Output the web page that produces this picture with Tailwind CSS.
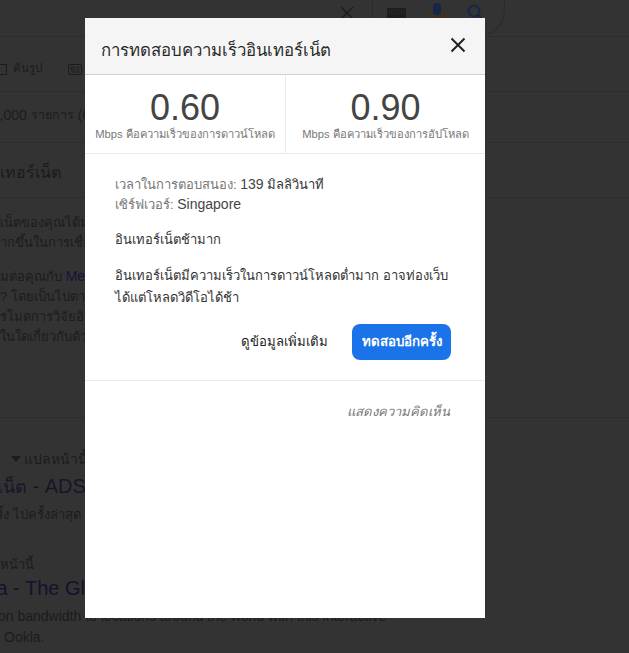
<!DOCTYPE html>
<html lang="th">
<head>
<meta charset="utf-8">
<script src="https://cdn.jsdelivr.net/npm/@tailwindcss/browser@4"></script>
<title>Speed test</title>
</head>
<body class="m-0 bg-[#333333]">
<div class="relative w-[629px] h-[653px] overflow-hidden bg-[#333333] font-['Liberation_Sans','Noto_Sans',sans-serif] text-[#1d1d1d]">
  <!-- dimmed page behind -->
  <div class="flex flex-col w-[629px]">
    <div class="h-[37px] border-b border-[#2d2d2d] flex items-start">
      <svg width="14" height="14" viewBox="0 0 14 14" class="ml-[340px] mt-[6px]"><path d="M1 1L13 13M13 1L1 13" stroke="#1c1c1c" stroke-width="1.4"/></svg>
      <div class="ml-[18px] w-[133px] h-[36px] flex items-start border-r border-b border-[#2b2b2b] rounded-br-[26px]">
        <div class="w-px h-[28px] bg-[#2b2b2b]"></div>
        <svg width="19" height="10" viewBox="0 0 19 10" class="ml-[14px] mt-[8px]"><rect width="19" height="10" fill="#1e1e1e"/><path d="M2 3H17M2 5.5H17" stroke="#333333" stroke-width="0.8" stroke-dasharray="1 1"/></svg>
        <svg width="16" height="16" viewBox="0 0 16 16" class="ml-[23px] mt-[2px]"><path d="M1 10C1 18 15 18 15 10" fill="none" stroke="#4a2f14" stroke-width="2"/><rect x="4" y="1" width="8" height="12" rx="4" fill="#152648"/></svg>
        <svg width="16" height="16" viewBox="0 0 16 16" class="ml-[21px] mt-[3px]"><circle cx="8" cy="8" r="5.5" fill="none" stroke="#152648" stroke-width="2"/><path d="M12 12L16 16" stroke="#152648" stroke-width="2"/></svg>
      </div>
    </div>
    <div class="h-[55px] border-b border-[#2d2d2d] flex items-center text-[11.5px] text-[#1c1c1c] pt-[10px]">
      <span class="w-[7px] h-[11px] border border-l-0 border-[#1c1c1c] mr-[6px]"></span><span class="mr-[26px]">ค้นรูป</span>
      <svg width="14" height="11" viewBox="0 0 14 11"><rect x="0.5" y="0.5" width="13" height="10" rx="1.5" fill="none" stroke="#1c1c1c"/><path d="M3 3H6V6H3ZM8 3.5H11.5M8 6H11.5M3 8H11.5" fill="none" stroke="#1c1c1c"/></svg>
    </div>
    <div class="h-[50px] flex items-center ml-[-16px] pb-[4px] text-[#1c1c1c] whitespace-nowrap"><span class="text-[14px]">25,000</span><span class="text-[12.5px] ml-[4px]">รายการ</span><span class="text-[14px] ml-[4px]">(0</span></div>
    <div class="h-[56px] border-y border-[#2d2d2d] flex items-center pt-[5px] text-[16px] text-[#1a1a1a]">เทอร์เน็ต</div>
    <div class="pt-[15px] h-[220px] border-b border-[#2d2d2d] text-[13px] whitespace-nowrap text-[#1c1c1c]">
      <div class="h-[20px] leading-[20px]">เน็ตของคุณได้ม</div>
      <div class="h-[20px] leading-[20px]">ากขึ้นในการเชื่อ</div>
      <div class="h-[21px] leading-[20px] mt-[13px]">มต่อคุณกับ <span class="text-[14px] text-[#15153a]">Me</span></div>
      <div class="h-[20px] leading-[20px]">? โดยเป็นไปตา</div>
      <div class="h-[20px] leading-[20px]">รโมตการวิจัยอิน</div>
      <div class="h-[20px] leading-[20px]">ในใดเกี่ยวกับตัวคุ</div>
    </div>
    <div class="pt-[31px] text-[14px] whitespace-nowrap text-[#1c1c1c]">
      <div class="flex items-center h-[20px] pl-[11px]"><span class="w-0 h-0 border-x-[5px] border-t-[6px] border-x-transparent border-t-[#1c1c1c] mr-[3px]"></span><span>แปลหน้านี้</span></div>
      <div class="h-[28px] leading-[28px] text-[#1a1428] mt-[3px] ml-[-3px]"><span class="text-[18px]">เน็ต</span><span class="text-[20px]"> - ADSL</span></div>
      <div class="h-[20px] text-[13px] leading-[20px] mt-[5px] ml-[-13px]">ครั้ง ไปครั้งล่าสุด</div>
      <div class="h-[20px] mt-[30px] text-[13px] leading-[20px]">หน้านี้</div>
      <div class="h-[28px] text-[20px] leading-[28px] text-[#14122e] ml-[-8px] mt-[-1px]">la - The Global</div>
      <div class="h-[20px] leading-[20px] mt-[4px] ml-[-2px]">on bandwidth to locations around the world with this interactive</div>
      <div class="h-[20px] leading-[20px] mt-[1px] ml-[4px]">Ookla.</div>
    </div>
  </div>

  <!-- modal -->
  <div class="absolute left-[85px] top-[18px] w-[400px] h-[600px] bg-white flex flex-col">
    <div class="h-[57px] bg-[#f5f5f5] border-b border-[#cfcfcf] flex items-center justify-between pl-[16px] pr-[19px] shrink-0">
      <div class="text-[16.75px] text-[#2a2a2a] mt-[10px]">การทดสอบความเร็วอินเทอร์เน็ต</div>
      <svg width="16" height="16" viewBox="0 0 16 16" class="mt-[-2px]"><path d="M1.5 1.5L14.5 14.5M14.5 1.5L1.5 14.5" stroke="#222222" stroke-width="2"/></svg>
    </div>
    <div class="flex h-[79px] border-b border-[#ebebeb] shrink-0">
      <div class="w-[201px] border-r border-[#ebebeb] flex flex-col items-center pt-[15px]">
        <div class="text-[36px] leading-[36px] text-[#444444]">0.60</div>
        <div class="text-[11.2px] leading-[16px] text-[#777777]">Mbps คือความเร็วของการดาวน์โหลด</div>
      </div>
      <div class="flex-1 flex flex-col items-center pt-[15px]">
        <div class="text-[36px] leading-[36px] text-[#444444]">0.90</div>
        <div class="text-[11.2px] leading-[16px] text-[#777777]">Mbps คือความเร็วของการอัปโหลด</div>
      </div>
    </div>
    <div class="pl-[30px] pr-[34px] pt-[20px] text-[13px] text-[#333333] shrink-0">
      <div class="h-[20px] leading-[20px]"><span class="text-[#777777]">เวลาในการตอบสนอง:</span> <span class="text-[14px] text-[#444444]">139</span> มิลลิวินาที</div>
      <div class="h-[20px] leading-[20px]"><span class="text-[#777777]">เซิร์ฟเวอร์:</span> <span class="text-[14px] text-[#444444]">Singapore</span></div>
      <div class="h-[20px] leading-[20px] mt-[16px]">อินเทอร์เน็ตช้ามาก</div>
      <div class="leading-[22px] mt-[15px]">อินเทอร์เน็ตมีความเร็วในการดาวน์โหลดต่ำมาก อาจท่องเว็บได้แต่โหลดวิดีโอได้ช้า</div>
    </div>
    <div class="flex items-center justify-end pr-[34px] mt-[15px] shrink-0">
      <div class="text-[13.15px] text-[#222222] mr-[24px] font-medium">ดูข้อมูลเพิ่มเติม</div>
      <div class="w-[99px] h-[36px] rounded-[8px] bg-[#1a73e8] text-white text-[13.3px] font-bold flex items-center justify-center">ทดสอบอีกครั้ง</div>
    </div>
    <div class="mt-[20px] border-t border-[#ebebeb] pt-[21px] pr-[35px] text-right text-[13.1px] italic text-[#777777] shrink-0">แสดงความคิดเห็น</div>
  </div>
</div>
</body>
</html>
